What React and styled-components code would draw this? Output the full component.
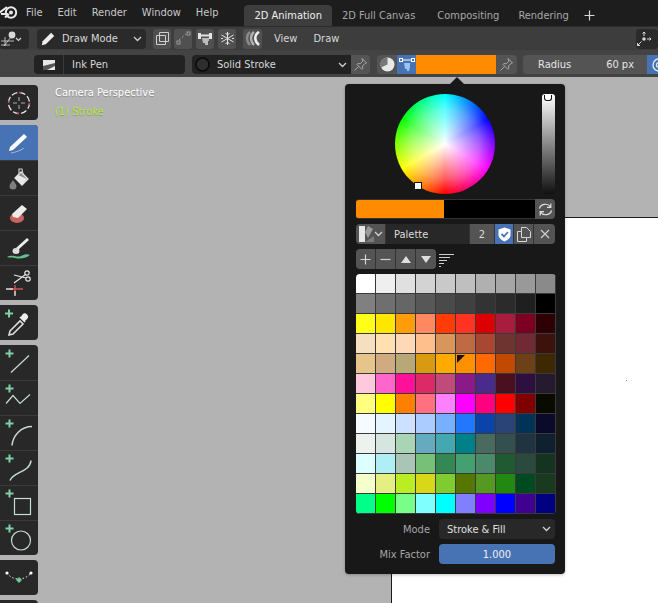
import React from "react";
import styled, { createGlobalStyle } from "styled-components";

const GlobalStyle = createGlobalStyle`
  html, body { margin: 0; padding: 0; background: #b3b3b3; }
  * { box-sizing: border-box; }
`;

const Page = styled.div`
  width: 658px;
  height: 603px;
  overflow: hidden;
  display: flex;
  flex-direction: column;
  font-family: "DejaVu Sans Condensed", "DejaVu Sans", sans-serif;
  font-size: 11px;
  color: #e6e6e6;
`;

const TopBar = styled.div`
  height: 26px;
  flex: none;
  background: #1d1d1d;
  display: flex;
  align-items: center;
  white-space: nowrap;
`;
const Logo = styled.div`
  width: 26px;
  height: 26px;
  flex: none;
  margin-left: -4px;
  margin-right: 4px;
  padding-bottom: 2px;
  display: flex;
  align-items: center;
  justify-content: center;
`;
const MenuItem = styled.span`
  color: #c8c8c8;
  margin-right: ${(p) => p.$gap}px;
  padding-bottom: 2px;
`;
const Tabs = styled.div`
  display: flex;
  align-self: flex-end;
  height: 21px;
  margin-left: ${(p) => p.$ml}px;
  align-items: center;
`;
const Tab = styled.div`
  height: 21px;
  display: flex;
  align-items: center;
  padding: 0 10px;
  margin-right: ${(p) => p.$mr || 0}px;
  border-radius: 4px 4px 0 0;
  background: ${(p) => (p.$active ? "#3d3d3d" : "transparent")};
  color: ${(p) => (p.$active ? "#f0f0f0" : "#a8a8a8")};
`;
const AddTab = styled.div`
  margin-left: 5px;
  display: flex;
`;

const ModeBar = styled.div`
  height: 24px;
  flex: none;
  background: #3d3d3d;
  display: flex;
  align-items: center;
  white-space: nowrap;
  border-top: 1px solid #2c2c2c;
`;
const DarkField = styled.div`
  height: ${(p) => p.$h || 20}px;
  width: ${(p) => p.$w}px;
  flex: none;
  margin-left: ${(p) => p.$ml || 0}px;
  background: #2a2a2a;
  border-radius: 4px;
  display: flex;
  align-items: center;
  position: relative;
`;
const IconButton = styled.div`
  width: ${(p) => p.$w || 18}px;
  height: 20px;
  flex: none;
  margin-left: ${(p) => p.$ml || 0}px;
  background: ${(p) => p.$bg || "#505050"};
  border-radius: 3px;
  display: flex;
  align-items: center;
  justify-content: center;
`;
const Caret = styled.span`
  position: absolute;
  right: ${(p) => p.$r || 4}px;
  top: 50%;
  margin-top: -3px;
  display: flex;
`;
const BarText = styled.span`
  margin-left: ${(p) => p.$ml}px;
  color: ${(p) => p.$color || "#d8d8d8"};
`;
const BarIcon = styled.div`
  margin-left: ${(p) => p.$ml}px;
  display: flex;
`;
const Spring = styled.div`
  flex: 1;
`;

const ToolSettings = styled.div`
  height: 27px;
  flex: none;
  background: #434343;
  display: flex;
  align-items: center;
  white-space: nowrap;
  padding-top: 2px;
`;
const InkField = styled.div`
  width: ${(p) => p.$w}px;
  height: 19px;
  flex: none;
  margin-left: ${(p) => p.$ml}px;
  background: #222222;
  display: flex;
  align-items: center;
  position: relative;
  border-radius: ${(p) => p.$radius || "4px"};
`;
const InkIcon = styled.div`
  width: 30px;
  height: 19px;
  flex: none;
  border-right: 1px solid #3a3a3a;
  display: flex;
  align-items: center;
  justify-content: center;
`;
const Swatch = styled.div`
  width: ${(p) => p.$w}px;
  height: 19px;
  flex: none;
  background: ${(p) => p.$bg};
  display: flex;
  align-items: center;
  justify-content: center;
  border-radius: ${(p) => p.$radius || 0};
  margin-left: ${(p) => p.$ml || 0}px;
`;
const RadiusField = styled.div`
  width: 124px;
  height: 19px;
  flex: none;
  margin-left: 6px;
  padding: 0 13px 0 15px;
  background: #545454;
  border-radius: 4px 0 0 4px;
  display: flex;
  justify-content: space-between;
  align-items: center;
`;

const Viewport = styled.div`
  flex: 1;
  position: relative;
  background: #b3b3b3;
  padding-top: 8px;
  display: flex;
  flex-direction: column;
  gap: 5px;
`;
const CanvasSheet = styled.div`
  position: absolute;
  left: 391px;
  top: 140px;
  width: 300px;
  height: 500px;
  background: #fff;
  border: 1px solid #1a1a1a;
`;
const Dot = styled.div`
  position: absolute;
  left: 234px;
  top: 162px;
  width: 1px;
  height: 1px;
  background: #888;
`;
const ViewLabel = styled.div`
  position: absolute;
  left: 55px;
  top: 6px;
  line-height: 19px;
  color: #ffffff;
  text-shadow: 0 1px 1px rgba(0, 0, 0, 0.25);
`;
const ViewSub = styled.div`
  color: #b6ea2e;
  text-shadow: 0 1px 1px rgba(0, 0, 0, 0.2);
`;
const ToolGroup = styled.div`
  width: 38px;
  flex: none;
  background: #282828;
  border-radius: 0 4px 4px 0;
  display: flex;
  flex-direction: column;
  overflow: hidden;
`;
const Tool = styled.div`
  height: ${(p) => p.$h || 35}px;
  display: flex;
  align-items: center;
  justify-content: center;
  background: ${(p) => (p.$active ? "#4772b3" : "transparent")};
  border-top: ${(p) => (p.$sep ? "1px solid #3a3a3a" : "none")};
`;

const Arrow = styled.div`
  position: absolute;
  left: 449px;
  top: 0;
  width: 0;
  height: 0;
  border-left: 8px solid transparent;
  border-right: 8px solid transparent;
  border-bottom: 8px solid #181818;
`;
const Popup = styled.div`
  position: absolute;
  left: 345px;
  top: 7px;
  width: 220px;
  height: 490px;
  background: #181818;
  border-radius: 4px;
  padding: 10px 10px 0 11px;
  display: flex;
  flex-direction: column;
  box-shadow: 0 1px 3px rgba(0, 0, 0, 0.25);
`;
const PickerRow = styled.div`
  height: 100px;
  display: flex;
  justify-content: flex-end;
  position: relative;
  margin-bottom: 5px;
`;
const Wheel = styled.div`
  position: absolute;
  left: 39px;
  top: 0;
  width: 100px;
  height: 100px;
  border-radius: 50%;
  background:
    radial-gradient(closest-side, #fff 0%, rgba(255, 255, 255, 0.85) 15%, rgba(255, 255, 255, 0.62) 40%, rgba(255, 255, 255, 0.35) 70%, rgba(255, 255, 255, 0.1) 90%, rgba(255, 255, 255, 0) 100%),
    conic-gradient(#0ff, #00f 60deg, #f0f 120deg, #f00 180deg, #ff0 240deg, #0f0 300deg, #0ff 360deg);
`;
const WheelHandle = styled.div`
  position: absolute;
  left: 20px;
  top: 89px;
  width: 6px;
  height: 6px;
  background: #fff;
  border: 1px solid #111;
  box-sizing: content-box;
  margin: -1px;
`;
const ValueBar = styled.div`
  width: 13px;
  height: 100px;
  border-radius: 3px;
  background: linear-gradient(#fff, #e8e8e8 10%, #888 50%, #111);
  position: relative;
`;
const ValueHandle = styled.div`
  position: absolute;
  left: 2px;
  top: 1px;
  width: 8px;
  height: 6px;
  background: #fff;
  border: 1px solid #111;
  border-top: none;
  border-radius: 0 0 3px 3px;
`;
const CompareRow = styled.div`
  height: 20px;
  display: flex;
  margin-bottom: 5px;
`;
const CompareBar = styled.div`
  flex: 1;
  display: flex;
  border-top: 1px solid #333;
  border-bottom: 1px solid #333;
  border-radius: 3px 0 0 3px;
  overflow: hidden;
`;
const CompareSide = styled.div`
  background: ${(p) => p.$bg};
  width: ${(p) => p.$w}px;
`;
const PaletteRow = styled.div`
  height: 20px;
  display: flex;
  margin-bottom: 5px;
`;
const Segment = styled.div`
  width: ${(p) => p.$w}px;
  flex: ${(p) => (p.$w ? "none" : 1)};
  background: ${(p) => p.$bg || "#545454"};
  border-right: 1px solid #333;
  display: flex;
  align-items: center;
  justify-content: ${(p) => (p.$left ? "flex-start" : "center")};
  padding-left: ${(p) => (p.$left ? 8 : 0)}px;
  color: #dcdcdc;
  &:first-child { border-radius: 4px 0 0 4px; }
  &:last-child { border-radius: 0 4px 4px 0; border-right: none; }
`;
const RefreshButton = styled(Segment)`
  border-radius: 0 4px 4px 0;
  border-right: none;
`;
const ActionRow = styled.div`
  height: 20px;
  display: flex;
  align-items: center;
  margin-bottom: 5px;
`;
const ActionGroup = styled.div`
  display: flex;
  height: 20px;
  margin-right: 3px;
`;
const Grid = styled.div`
  display: grid;
  grid-template-columns: repeat(10, 20px);
  grid-auto-rows: 20px;
  width: 200px;
  height: 240px;
  background: #333;
  border-radius: 4px;
  overflow: hidden;
  margin-bottom: 5px;
`;
const Cell = styled.div`
  background: ${(p) => p.$c};
  border-right: 1px solid #3a3a3a;
  border-bottom: 1px solid #3a3a3a;
  position: relative;
`;
const CellMark = styled.div`
  position: absolute;
  left: 1px;
  top: 1px;
  width: 0;
  height: 0;
  border-top: 8px solid #111;
  border-right: 8px solid transparent;
`;
const PropRow = styled.div`
  height: 20px;
  display: flex;
  align-items: center;
  justify-content: flex-end;
  margin-bottom: 5px;
`;
const PropLabel = styled.span`
  color: #a6a6a6;
  margin-right: 9px;
`;
const Select = styled.div`
  width: 116px;
  height: 20px;
  background: #282828;
  border-radius: 4px;
  padding-left: 8px;
  display: flex;
  align-items: center;
  position: relative;
  color: #e0e0e0;
`;
const SliderField = styled.div`
  width: 116px;
  height: 20px;
  background: #4772b3;
  border-radius: 4px;
  display: flex;
  align-items: center;
  justify-content: center;
  color: #f0f0f0;
`;

const CaretDown = ({ color = "#d0d0d0" }) => (
  <svg width="9" height="6" viewBox="0 0 9 6">
    <path d="M1 1l3.500 3.500L8 1" fill="none" stroke={color} strokeWidth="1.300" />
  </svg>
);

const Pin = () => (
  <svg width="15" height="15" viewBox="0 0 15 15" fill="none" stroke="#a8a8a8" strokeWidth="1">
    <path d="M9 1.500l4.500 4.500-1.500.5-2.500 2.500.3 2.500-1 .8L4 7.500l.8-1 2.500.3L9.800 4.300z" />
    <path d="M5.500 9.500L1.500 13.500" />
  </svg>
);

const BlenderLogo = () => (
  <svg width="20" height="16" viewBox="0 0 20 16" fill="none">
    <circle cx="12" cy="8.500" r="5.200" stroke="#e8e8e8" strokeWidth="2" />
    <circle cx="12" cy="8.500" r="2" fill="#e8e8e8" />
    <path d="M0 9l8-6M2 10h7M6 13.500L10 10" stroke="#e8e8e8" strokeWidth="2" />
  </svg>
);

const ObjectGizmo = () => (
  <svg width="24" height="17" viewBox="0 0 24 17" fill="none" stroke="#d8d8d8">
    <path d="M2 11h13M2 15h9M6 7v9M12 7l-7 9" strokeWidth="0.800" />
    <circle cx="13" cy="5" r="3.400" fill="#d8d8d8" stroke="none" />
    <path d="M17 8l2.500 2.500L22 8" strokeWidth="1.200" />
  </svg>
);

const PencilIcon = ({ size = 18 }) => (
  <svg width={size} height={size} viewBox="0 0 18 18">
    <path d="M2 16l1-4.500L12.500 2l3.500 3.500L6.500 15z" fill="#eee" />
  </svg>
);

const SquaresIcon = () => (
  <svg width="15" height="15" viewBox="0 0 15 15" fill="none" stroke="#cfcfcf">
    <path d="M1.500 4.500h9v9h-9zM4.500 4.500v-3h9v9h-3" />
    <path d="M4.500 4.500v6h6" />
  </svg>
);

const DashedIcon = () => (
  <svg width="15" height="15" viewBox="0 0 15 15" fill="none" stroke="#9a9a9a">
    <rect x="1" y="10" width="3" height="3" />
    <rect x="11" y="1" width="3" height="3" />
    <path d="M3 9l7-6" strokeDasharray="2 2" />
  </svg>
);

const BrushMaskIcon = () => (
  <svg width="16" height="15" viewBox="0 0 16 15" fill="#e4e4e4">
    <path d="M1 2h3v6H1zM12 2h3v6h-3z" />
    <path d="M4 3.500h8v2H4z" />
    <path d="M5 7h7v3h-1v4H8v-2H6z" fill="#bbb" />
  </svg>
);

const SnowIcon = () => (
  <svg width="15" height="15" viewBox="0 0 15 15" fill="none" stroke="#e4e4e4" strokeWidth="1">
    <path d="M7.500 1v13M1.500 4l12 7M1.500 11l12-7" />
    <path d="M5.500 2l2 2 2-2M5.500 13l2-2 2 2M1 7.500h2M12 7.500h2" />
  </svg>
);

const OnionIcon = () => (
  <svg width="17" height="15" viewBox="0 0 17 15" fill="none">
    <path d="M6 1C2 4 2 10 6 14" stroke="#8a8a8a" strokeWidth="2.400" />
    <path d="M10 1C6 4 6 10 10 14" stroke="#b0b0b0" strokeWidth="2.400" />
    <path d="M15 1C10 4 10 10 15 14" stroke="#eee" strokeWidth="2.600" />
  </svg>
);

const GizmoIcon = () => (
  <svg width="16" height="16" viewBox="0 0 16 16" fill="none" stroke="#d8d8d8">
    <circle cx="8" cy="8" r="1.800" fill="#d8d8d8" stroke="none" />
    <path d="M8 5V1M6.500 2.500L8 1l1.500 1.500M11 8h4M13.500 6.500L15 8l-1.500 1.500M5.500 10.500L1.500 14.500M1.500 12v2.500H4" />
  </svg>
);

const SheetIcon = () => (
  <svg width="14" height="12" viewBox="0 0 14 12">
    <path d="M1 1h12v10H1z" fill="#e8e8e8" />
    <path d="M1 7l12-3v3L5 11H1z" fill="#555" />
  </svg>
);

const PlusMark = ({ x = 5.5, y = 6.5 }) => (
  <path d={`M${x} ${y - 4}v8M${x - 4} ${y}h8`} stroke="#7fd0a8" strokeWidth="2" fill="none" />
);

const CursorIcon = () => (
  <svg width="26" height="26" viewBox="0 0 26 26" fill="none">
    <circle cx="13" cy="13" r="10.500" stroke="#e8e8e8" strokeWidth="1.300" strokeDasharray="6 2.300" />
    <circle cx="13" cy="13" r="10.500" stroke="#c64a4a" strokeWidth="1.300" strokeDasharray="2 14.500" />
    <path d="M13 7v4M13 15v4M7 13h4M15 13h4" stroke="#aaa" strokeWidth="1.100" />
  </svg>
);

const DrawTool = () => (
  <svg width="24" height="24" viewBox="0 0 24 24" fill="none">
    <path d="M3 16L17 3l3 3L6 19l-4 1z" fill="#fff" />
    <path d="M4 22c5-1 9-2 13-5" stroke="#9fb6dc" strokeWidth="1" />
  </svg>
);

const FillTool = () => (
  <svg width="24" height="24" viewBox="0 0 24 24" fill="none">
    <path d="M14 6l7 7-6 6-7-7z" fill="#8f8f8f" stroke="#e0e0e0" strokeWidth="1.300" />
    <path d="M11 9l9 4-5 6-7-7z" fill="#e8e8e8" />
    <path d="M12 8V3h3l1 5" stroke="#ccc" strokeWidth="1.200" />
    <path d="M6 14c1 2 3.500 4 3.500 6a3.500 3.500 0 0 1-7 0c0-2 2.500-4 3.500-6z" fill="#7f7f7f" />
  </svg>
);

const EraseTool = () => (
  <svg width="24" height="24" viewBox="0 0 24 24">
    <ellipse cx="10" cy="17" rx="7" ry="5" fill="#c9635f" />
    <path d="M5 13L15 4l5 4-9 9-5-1z" fill="#ececec" />
  </svg>
);

const TintTool = () => (
  <svg width="28" height="24" viewBox="0 0 28 24" fill="none">
    <path d="M22 2L11 12l2 2L24 4z" fill="#ececec" />
    <ellipse cx="11" cy="15" rx="3.500" ry="3" fill="#ddd" />
    <path d="M2 21c6-3 10 1 14-1s6-2 9-1c-5 4-11 4-15 3-3-1-5 0-8-1z" fill="#62c08c" />
  </svg>
);

const CutterTool = () => (
  <svg width="26" height="28" viewBox="0 0 26 28" fill="none" stroke="#e6e6e6" strokeWidth="1.200">
    <circle cx="21" cy="4" r="2.200" />
    <circle cx="22" cy="10" r="2.200" />
    <path d="M19.500 5.500L8 14M20 9L8 6" />
    <path d="M4 20h13" stroke="#cc5555" strokeWidth="1.400" />
    <path d="M9 16v10" stroke="#cc5555" strokeWidth="1.400" />
    <path d="M0 20h7M9 22v5" stroke="#ddd" strokeWidth="1.300" />
  </svg>
);

const EyedropTool = () => (
  <svg width="28" height="28" viewBox="0 0 28 28" fill="none">
    <PlusMark x={4} y={4.5} />
    <path d="M5 22l10-10 3 3-10 10-4 1z" fill="none" stroke="#dcdcdc" strokeWidth="1.600" />
    <path d="M15 8l5 5M18 6a2 2 0 0 1 3.500 3.500l-2 2-3-3z" fill="#eee" stroke="#eee" strokeWidth="1.500" />
  </svg>
);

const ShapeTool = ({ children }) => (
  <svg width="30" height="32" viewBox="0 0 30 32" fill="none" stroke="#c5dcd0" strokeWidth="1.200">
    <PlusMark />
    {children}
  </svg>
);

const InterpolateTool = () => (
  <svg width="30" height="18" viewBox="0 0 30 18" fill="none">
    <path d="M3 4c5 8 18 8 24 0" stroke="#e8e8e8" strokeWidth="1" strokeDasharray="1.500 2" />
    <circle cx="3" cy="4" r="1.600" fill="#fff" />
    <circle cx="27" cy="4" r="1.600" fill="#fff" />
    <path d="M15 8l3 3-3 3-3-3z" fill="#6fc49a" />
  </svg>
);

const Plus = () => (
  <svg width="11" height="11" viewBox="0 0 11 11" stroke="#d8d8d8" strokeWidth="1.200">
    <path d="M5.500 0.500v10M0.500 5.500h10" />
  </svg>
);
const Minus = () => (
  <svg width="11" height="11" viewBox="0 0 11 11" stroke="#cfcfcf" strokeWidth="1.200">
    <path d="M0.500 5.500h10" />
  </svg>
);
const Tri = ({ up }) => (
  <svg width="10" height="7" viewBox="0 0 10 7" fill="#dedede">
    <path d={up ? "M5 0l5 7H0z" : "M5 7L0 0h10z"} />
  </svg>
);
const SortIcon = () => (
  <svg width="15" height="15" viewBox="0 0 15 15" stroke="#d0d0d0">
    <path d="M0 2.500h15M0 5.500h11M0 8.500h8M0 11.500h5M0 14.500h2" />
  </svg>
);
const RefreshIcon = () => (
  <svg width="15" height="15" viewBox="0 0 15 15" fill="none" stroke="#e0e0e0" strokeWidth="1.200">
    <path d="M1.500 6.500C2.500 2 9.500 0.500 12.500 5M12.800 1.500V5.300H9" />
    <path d="M13.500 8.500C12.500 13 5.500 14.500 2.500 10M2.200 13.500V9.700H6" />
  </svg>
);
const ShieldIcon = () => (
  <svg width="13" height="15" viewBox="0 0 13 15">
    <path d="M6.500 0.500L12.500 2.500V8C12.500 11 9 13.500 6.500 14.500 4 13.500 0.500 11 0.500 8V2.500z" fill="#fff" />
    <path d="M3.500 7l2.500 2.500L10 5" fill="none" stroke="#4772b3" strokeWidth="1.800" />
  </svg>
);
const CopyIcon = () => (
  <svg width="14" height="15" viewBox="0 0 14 15" fill="none" stroke="#d8d8d8">
    <path d="M0.500 4.500h4v-4h5l4 4v6h-4v4h-9z" />
    <path d="M4.500 4.500v6h5" />
  </svg>
);
const CloseIcon = () => (
  <svg width="10" height="10" viewBox="0 0 10 10" stroke="#d0d0d0" strokeWidth="1.200">
    <path d="M1 1l8 8M9 1L1 9" />
  </svg>
);
const PaletteIcon = () => (
  <svg width="15" height="16" viewBox="0 0 15 16">
    <path d="M0 0h6v16H0z" fill="#e6e6e6" />
    <path d="M6 6l3-6 5 3-5 9z" fill="#9a9a9a" />
    <path d="M6 16l9-6v6z" fill="#7a7a7a" />
  </svg>
);
const ColorModeIcon = () => (
  <svg width="15" height="15" viewBox="0 0 15 15">
    <circle cx="7.500" cy="7.500" r="7" fill="#e8e8e8" />
    <path d="M7.500 7.500V0.500A7 7 0 0 0 1 10.500z" fill="#777" />
  </svg>
);
const VertexColorIcon = () => (
  <svg width="16" height="16" viewBox="0 0 16 16" fill="none">
    <rect x="0.500" y="1.500" width="3" height="3" stroke="#fff" />
    <rect x="12.500" y="1.500" width="3" height="3" stroke="#fff" />
    <path d="M3.500 3h9" stroke="#fff" />
    <path d="M5 6h6v4l-1 4H8v-2H6z" fill="#9cc2f2" />
  </svg>
);
const StrokeCircle = () => (
  <svg width="15" height="15" viewBox="0 0 15 15">
    <circle cx="7.500" cy="7.500" r="6.500" fill="#2e2e2e" stroke="#0a0a0a" strokeWidth="1.500" />
  </svg>
);
const TargetIcon = () => (
  <svg width="14" height="16" viewBox="0 0 14 16" fill="none" stroke="#dde8f8" strokeWidth="1.400">
    <circle cx="9" cy="8" r="6" />
    <circle cx="9" cy="8" r="2.500" />
  </svg>
);

const swatches = [
  ["#ffffff", "#efefef", "#e0e0e0", "#d3d3d3", "#c9c9c9", "#bfbfbf", "#b0b0b0", "#a6a6a6", "#999999", "#8a8a8a"],
  ["#808080", "#6f6f6f", "#666666", "#575757", "#4a4a4a", "#404040", "#333333", "#2b2b2b", "#1f1f1f", "#000000"],
  ["#ffff1a", "#ffe600", "#ff9c0a", "#ff8860", "#ff3c08", "#ff3322", "#dd0000", "#a81c3e", "#7d0022", "#2e0006"],
  ["#f5dfc0", "#ffe0b0", "#ffd8b8", "#ffbf8c", "#d9965c", "#bf6a45", "#a84832", "#6e3530", "#702a33", "#3d120d"],
  ["#e6c48a", "#d0aa80", "#b8a878", "#d89a10", "#ffaa00", "#ff9000", "#ff6a00", "#c24a00", "#6e4018", "#3d2800"],
  ["#ffc8dc", "#ff66cc", "#ff1099", "#dd2a66", "#c04a7a", "#8a1a8a", "#4a2a8a", "#4a1020", "#2e1040", "#261a2e"],
  ["#ffff80", "#ffff00", "#ff8000", "#ff7080", "#ff80ff", "#ff00ff", "#ff0080", "#ff0000", "#800000", "#0a0a00"],
  ["#f5fbff", "#e5f5ff", "#cce0ff", "#aaccff", "#77b0ff", "#2277ff", "#0a44aa", "#2a4477", "#003355", "#0a0a2a"],
  ["#eef2ee", "#d5e5e0", "#aad5b5", "#66aac0", "#44a8b0", "#008088", "#4a6a60", "#334f50", "#1f3340", "#0f2030"],
  ["#ddffff", "#b0eef5", "#aac5b5", "#77c077", "#338855", "#44a070", "#4a8a6a", "#1f5a30", "#2a4a40", "#143320"],
  ["#f5ffcc", "#e5ee80", "#bbee22", "#d8d818", "#80cc30", "#557700", "#559922", "#228811", "#004a22", "#1a3a20"],
  ["#00ff88", "#00ff00", "#77ff88", "#80ffff", "#00ffff", "#8080ff", "#8000ff", "#0000ff", "#400090", "#000080"],
];

export default function App() {
  return (
    <Page>
      <GlobalStyle />
      <TopBar>
        <Logo><BlenderLogo /></Logo>
        <MenuItem $gap={15}>File</MenuItem>
        <MenuItem $gap={15}>Edit</MenuItem>
        <MenuItem $gap={15}>Render</MenuItem>
        <MenuItem $gap={15}>Window</MenuItem>
        <MenuItem $gap={0}>Help</MenuItem>
        <Tabs $ml={26}>
          <Tab $active>2D Animation</Tab>
          <Tab $mr={2}>2D Full Canvas</Tab>
          <Tab $mr={-1}>Compositing</Tab>
          <Tab>Rendering</Tab>
          <AddTab><Plus /></AddTab>
        </Tabs>
      </TopBar>

      <ModeBar>
        <DarkField $w={30} $ml={-1}>
          <ObjectGizmo />
        </DarkField>
        <DarkField $w={109} $ml={8}>
          <BarIcon $ml={3}><PencilIcon size={16} /></BarIcon>
          <BarText $ml={6}>Draw Mode</BarText>
          <Caret><CaretDown /></Caret>
        </DarkField>
        <IconButton $ml={7}><SquaresIcon /></IconButton>
        <IconButton $ml={3}><DashedIcon /></IconButton>
        <IconButton $ml={4}><BrushMaskIcon /></IconButton>
        <IconButton $ml={4}><SnowIcon /></IconButton>
        <IconButton $ml={7} $w={19}><OnionIcon /></IconButton>
        <BarText $ml={12}>View</BarText>
        <BarText $ml={16}>Draw</BarText>
        <Spring />
        <DarkField $w={22}><GizmoIcon /></DarkField>
      </ModeBar>

      <ToolSettings>
        <InkField $w={151} $ml={34}>
          <InkIcon><SheetIcon /></InkIcon>
          <BarText $ml={8}>Ink Pen</BarText>
        </InkField>
        <InkField $w={159} $ml={7} $radius="4px 0 0 4px">
          <BarIcon $ml={3}><StrokeCircle /></BarIcon>
          <BarText $ml={7}>Solid Stroke</BarText>
          <Caret><CaretDown /></Caret>
        </InkField>
        <Swatch $w={19} $bg="#545454" $radius="0 4px 4px 0"><Pin /></Swatch>
        <Swatch $w={20} $ml={7} $bg="#545454" $radius="4px 0 0 4px"><ColorModeIcon /></Swatch>
        <Swatch $w={19} $bg="#4772b3"><VertexColorIcon /></Swatch>
        <Swatch $w={80} $bg="#ff8c00" />
        <Swatch $w={21} $bg="#545454" $radius="0 4px 4px 0"><Pin /></Swatch>
        <RadiusField><span>Radius</span><span>60 px</span></RadiusField>
        <Swatch $w={20} $bg="#4772b3"><TargetIcon /></Swatch>
      </ToolSettings>

      <Viewport>
        <CanvasSheet><Dot /></CanvasSheet>
        <ViewLabel>
          Camera Perspective
          <ViewSub>(1) Stroke</ViewSub>
        </ViewLabel>

        <ToolGroup>
          <Tool><CursorIcon /></Tool>
        </ToolGroup>
        <ToolGroup>
          <Tool $active><DrawTool /></Tool>
          <Tool $sep><FillTool /></Tool>
          <Tool $sep><EraseTool /></Tool>
          <Tool $sep><TintTool /></Tool>
          <Tool $sep><CutterTool /></Tool>
        </ToolGroup>
        <ToolGroup>
          <Tool><EyedropTool /></Tool>
        </ToolGroup>
        <ToolGroup>
          <Tool><ShapeTool><path d="M7 25.500L25 8.500" /></ShapeTool></Tool>
          <Tool $sep><ShapeTool><path d="M2 21.500l7-8 7 8 10-9" /></ShapeTool></Tool>
          <Tool $sep><ShapeTool><path d="M8 28.500c1-10 9-19 20-19" strokeWidth="1.500" /></ShapeTool></Tool>
          <Tool $sep><ShapeTool><path d="M6 28.500c3-9 20-8 21-20" strokeWidth="1.500" /></ShapeTool></Tool>
          <Tool $sep><ShapeTool><rect x="10.500" y="11.500" width="16" height="16" /></ShapeTool></Tool>
          <Tool $sep><ShapeTool><circle cx="17" cy="18.500" r="9.500" /></ShapeTool></Tool>
        </ToolGroup>
        <ToolGroup>
          <Tool><InterpolateTool /></Tool>
        </ToolGroup>
        <ToolGroup>
          <Tool />
        </ToolGroup>

        <Arrow />
        <Popup>
          <PickerRow>
            <Wheel><WheelHandle /></Wheel>
            <ValueBar><ValueHandle /></ValueBar>
          </PickerRow>
          <CompareRow>
            <CompareBar>
              <CompareSide $bg="#ff8c00" $w={88} />
              <CompareSide $bg="#000" $w={91} />
            </CompareBar>
            <RefreshButton $w={20}><RefreshIcon /></RefreshButton>
          </CompareRow>
          <PaletteRow>
            <Segment $w={30} $bg="#545454"><PaletteIcon /><CaretDown /></Segment>
            <Segment $w={84} $bg="#282828" $left>Palette</Segment>
            <Segment $w={25}>2</Segment>
            <Segment $w={19} $bg="#4772b3"><ShieldIcon /></Segment>
            <Segment $w={20}><CopyIcon /></Segment>
            <Segment><CloseIcon /></Segment>
          </PaletteRow>
          <ActionRow>
            <ActionGroup>
              <Segment $w={20}><Plus /></Segment>
              <Segment $w={20}><Minus /></Segment>
              <Segment $w={20}><Tri up /></Segment>
              <Segment $w={20}><Tri /></Segment>
            </ActionGroup>
            <SortIcon />
          </ActionRow>
          <Grid>
            {swatches.flat().map((c, i) => (
              <Cell key={i} $c={c}>{i === 45 && <CellMark />}</Cell>
            ))}
          </Grid>
          <PropRow>
            <PropLabel>Mode</PropLabel>
            <Select>Stroke &amp; Fill<Caret><CaretDown /></Caret></Select>
          </PropRow>
          <PropRow>
            <PropLabel>Mix Factor</PropLabel>
            <SliderField>1.000</SliderField>
          </PropRow>
        </Popup>
      </Viewport>
    </Page>
  );
}
